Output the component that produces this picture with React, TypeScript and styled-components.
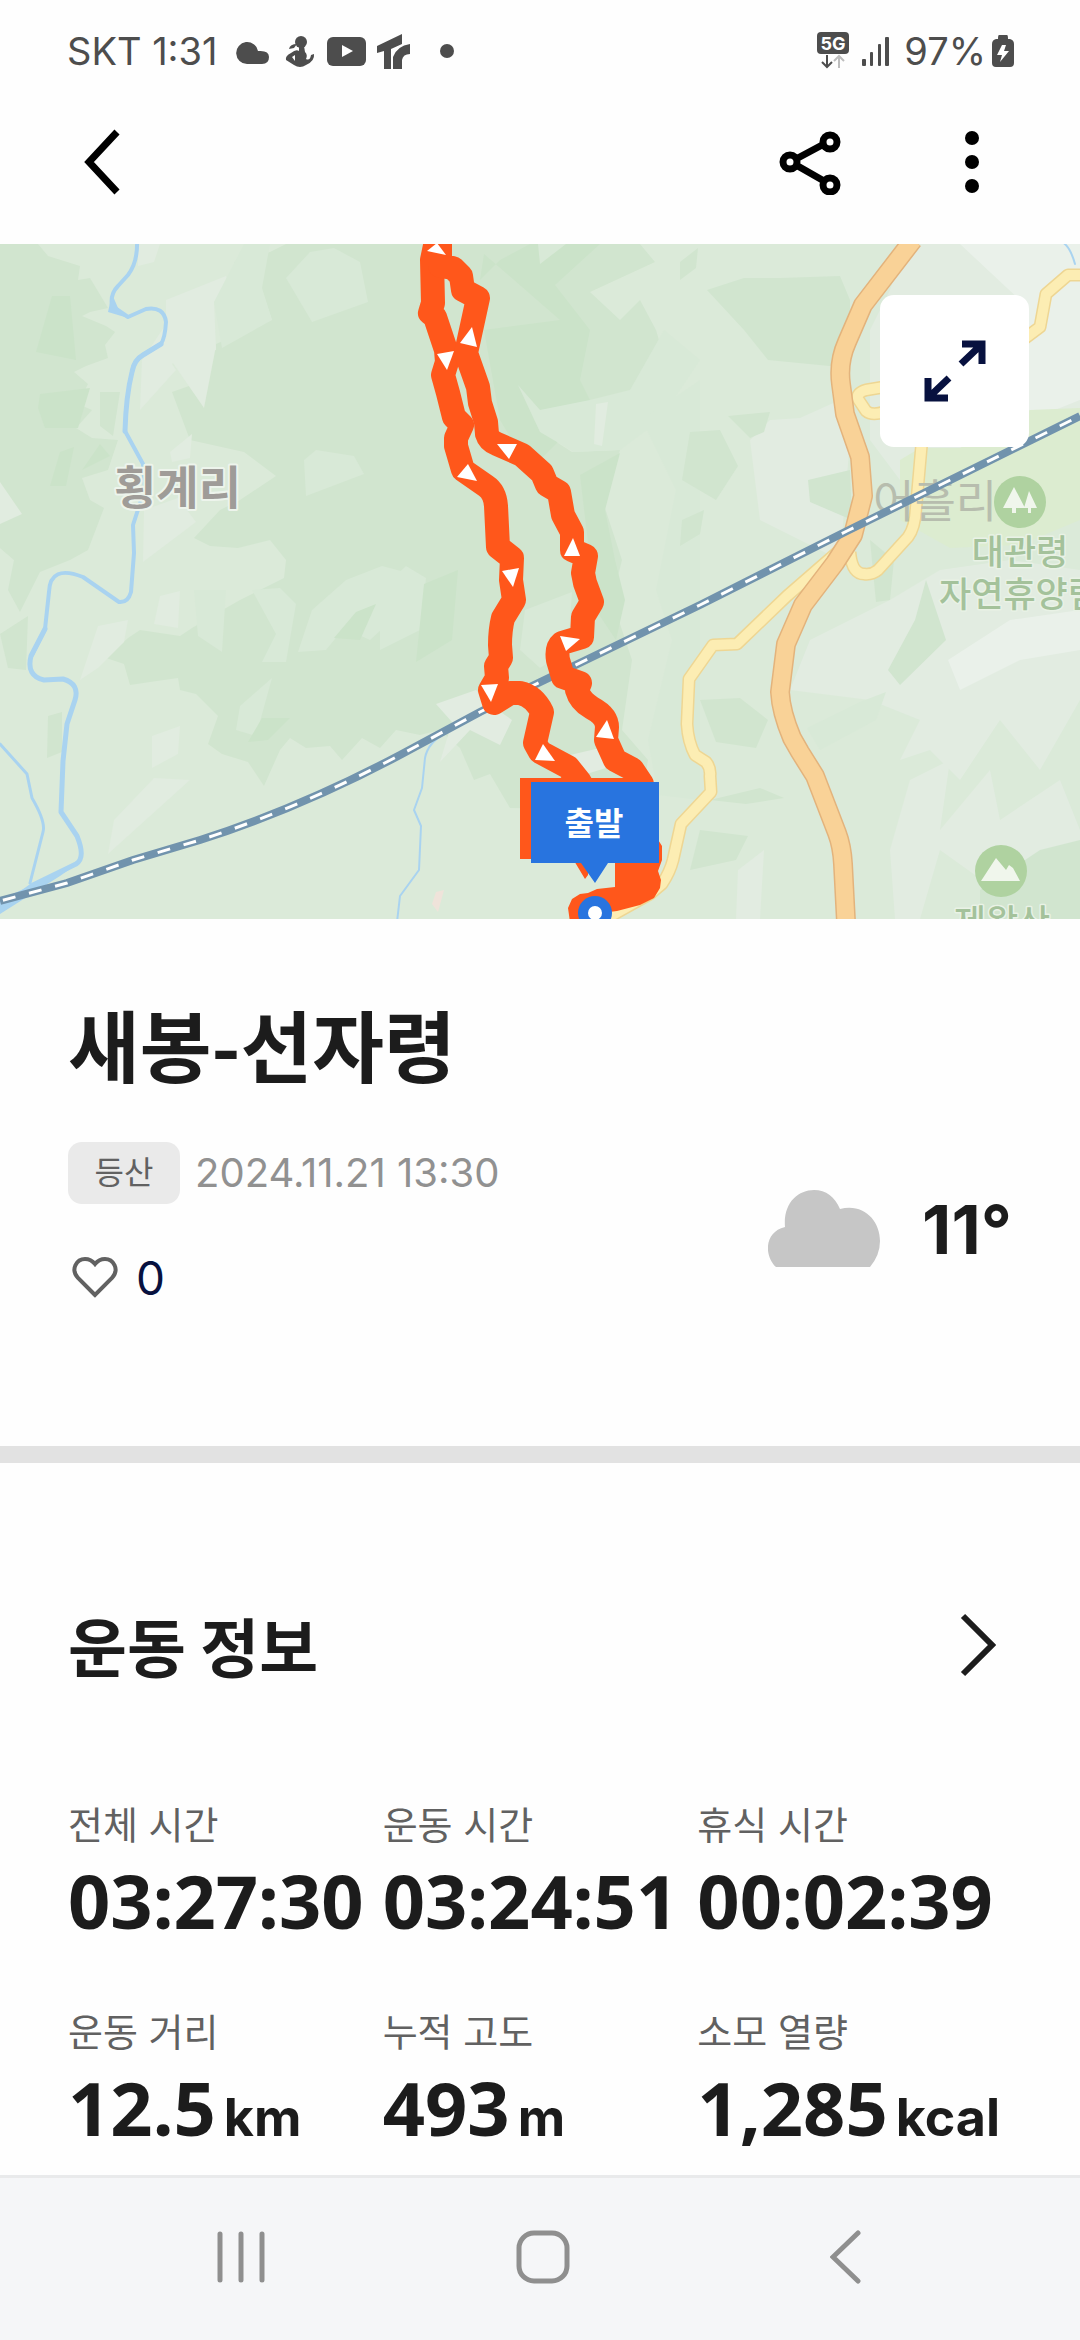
import React from "react";
import styled, { createGlobalStyle } from "styled-components";

const GlobalStyle = createGlobalStyle`
  *, *::before, *::after { box-sizing: border-box; }
  body {
    margin: 0;
    background: #fefefe;
    color: #1c1c1c;
    font-family: Inter, "Noto Sans CJK KR", sans-serif;
  }
  h1, h2, p, dl, dt, dd { margin: 0; }
  button { padding: 0; border: 0; background: none; cursor: pointer; font: inherit; color: inherit; }
  svg { display: block; }
`;

const Screen = styled.div`
  display: flex;
  flex-direction: column;
  min-height: 100vh;
`;

const StatusBar = styled.div`
  display: flex;
  align-items: center;
  justify-content: space-between;
  height: 102px;
  padding: 0 66px 0 67px;
  color: #4d4d4d;
  font-size: 38px;
  line-height: 48px;
`;

const StatusGroup = styled.div<{ $gap: number }>`
  display: flex;
  align-items: center;
  gap: ${(p) => p.$gap}px;
`;

const StatusText = styled.span`
  white-space: nowrap;
`;

const Header = styled.header`
  display: flex;
  align-items: center;
  justify-content: space-between;
  height: 142px;
  padding: 0 68px 22px 62px;
`;

const HeaderActions = styled.div`
  display: flex;
  gap: 82px;
`;

const IconButton = styled.button`
  display: grid;
  place-items: center;
  width: 80px;
  height: 80px;
`;

const MapPanel = styled.section`
  position: relative;
  height: 675px;
  overflow: hidden;
  background: #dbead9;
`;

const MapCanvas = styled.svg`
  width: 100%;
  height: 100%;
`;

const MapLabel = styled.text`
  font-family: "Noto Sans CJK KR", sans-serif;
  paint-order: stroke;
  stroke-linejoin: round;
`;

const ExpandButton = styled.button`
  position: absolute;
  top: 51px;
  right: 51px;
  display: grid;
  place-items: center;
  width: 149px;
  height: 152px;
  border-radius: 14px;
  background: #fff;
`;

const Summary = styled.section`
  padding: 80px 68px 138px;
`;

const Title = styled.h1`
  font-family: "Noto Sans CJK KR", sans-serif;
  font-size: 78px;
  font-weight: 700;
  line-height: 88px;
`;

const SummaryRow = styled.div`
  display: flex;
  align-items: center;
  justify-content: space-between;
  margin-top: 55px;
`;

const SummaryDetails = styled.div`
  display: flex;
  flex-direction: column;
  gap: 44px;
`;

const Meta = styled.div`
  display: flex;
  align-items: center;
  gap: 15px;
`;

const Chip = styled.span`
  display: grid;
  place-items: center;
  width: 112px;
  height: 62px;
  border-radius: 14px;
  background: #eaeaea;
  color: #616161;
  font-size: 32px;
  line-height: 48px;
`;

const DateText = styled.time`
  color: #919191;
  font-size: 40px;
  line-height: 48px;
`;

const LikeButton = styled.button`
  display: flex;
  align-items: center;
  gap: 18px;
  height: 60px;
  padding-left: 4px;
  color: #07113f;
  font-size: 46px;
  line-height: 60px;
`;

const Weather = styled.div`
  display: flex;
  align-items: center;
  gap: 42px;
  padding-top: 8px;
  font-size: 68px;
  font-weight: 700;
  line-height: 80px;
`;

const Divider = styled.hr`
  width: 100%;
  height: 17px;
  margin: 0;
  border: 0;
  background: #e2e2e2;
`;

const Workout = styled.section`
  flex: 1;
  padding: 141px 68px 20px;
`;

const SectionHeader = styled.div`
  display: flex;
  align-items: center;
  justify-content: space-between;
`;

const SectionTitle = styled.h2`
  font-family: "Noto Sans CJK KR", sans-serif;
  font-size: 64px;
  font-weight: 700;
  line-height: 80px;
`;

const Stats = styled.dl`
  display: grid;
  grid-template-columns: repeat(3, minmax(0, 1fr));
  row-gap: 65px;
  margin-top: 117px;
`;

const Stat = styled.div`
  display: flex;
  flex-direction: column;
  gap: 10px;
  white-space: nowrap;
`;

const StatLabel = styled.dt`
  color: #616161;
  font-size: 38px;
  line-height: 48px;
`;

const StatValue = styled.dd`
  display: flex;
  align-items: baseline;
  gap: 8px;
  font-family: "Noto Sans", sans-serif;
  font-size: 74px;
  font-weight: 700;
  line-height: 84px;
`;

const Unit = styled.span`
  font-family: Inter, sans-serif;
  font-size: 52px;
  line-height: 60px;
`;

const NavBar = styled.nav`
  display: grid;
  grid-template-columns: repeat(3, 1fr);
  align-items: center;
  height: 165px;
  padding: 0 83px 4px 90px;
  border-top: 3px solid #e9eaeb;
  background: #f5f6f8;
`;

const NavButton = styled.button`
  display: grid;
  place-items: center;
  height: 100px;
`;

const stats = [
  { label: "전체 시간", value: "03:27:30" },
  { label: "운동 시간", value: "03:24:51" },
  { label: "휴식 시간", value: "00:02:39" },
  { label: "운동 거리", value: "12.5", unit: "km" },
  { label: "누적 고도", value: "493", unit: "m" },
  { label: "소모 열량", value: "1,285", unit: "kcal" },
];

/* Map geometry, in map units */
const shade = {
  wood: "#d1e5cf",
  deep: "#cbe3c9",
  light: "#e1ece0",
  mid: "#d8e9d7",
  pale: "#e2ece1",
  snow: "#eaf1ea",
};

const terrain: [string, string][] = [
  [shade.wood, "0,244 38,244 48,256 80,266 78,280 90,278 108,308 90,312 82,316 106,326 115,332 105,345 108,358 86,366 74,372 88,384 78,404 92,410 76,428 92,438 118,440 108,470 82,478 90,500 104,508 88,550 70,560 40,572 20,612 8,590 14,560 0,548"],
  [shade.wood, "0,634 28,616 26,670 8,668"],
  [shade.wood, "48,716 62,712 62,752 47,758"],
  [shade.wood, "234,262 270,252 286,244 640,244 655,262 590,292 620,320 640,300 656,330 668,370 630,396 545,405 530,425 572,452 620,450 604,505 622,560 612,600 632,660 622,730 648,760 640,810 510,808 490,774 474,780 460,748 440,730 420,735 396,730 380,748 362,738 342,760 330,746 306,748 290,738 280,750 264,786 248,762 222,754 208,744 218,716 196,694 180,690 178,678 150,682 130,685 124,664 106,658 128,638 140,630 180,636 192,628 226,608 240,600 284,578 286,560 270,540 238,548 210,546 194,538 220,510 240,500 276,476 244,452 190,440 172,392 206,380 216,344 272,320 262,290"],
  [shade.deep, "52,296 70,296 76,360 36,352"],
  [shade.deep, "40,394 90,388 78,428 45,428 38,408"],
  [shade.deep, "60,452 74,447 66,486 50,486"],
  [shade.deep, "100,444 110,456 82,470"],
  [shade.wood, "100,392 120,392 113,436 100,426"],
  [shade.light, "138,244 160,244 154,262 138,266"],
  [shade.light, "226,276 232,290 214,302 216,350 190,346 172,364 176,370 140,410 142,360 166,324 166,300"],
  [shade.light, "170,322 200,322 216,346 204,408 164,350"],
  [shade.light, "192,434 190,458 172,462 170,452"],
  [shade.light, "144,510 178,498 196,522 143,562"],
  [shade.light, "0,482 22,514 0,524"],
  [shade.light, "98,626 128,620 124,642 98,668 80,680"],
  [shade.light, "160,596 180,591 178,628 154,624"],
  [shade.light, "152,736 180,726 178,754 152,768"],
  [shade.light, "154,778 190,780 108,854 114,820"],
  [shade.mid, "286,278 310,252 334,248 360,262 368,302 312,322"],
  [shade.mid, "244,244 270,244 262,288 272,320 222,348 214,302"],
  [shade.mid, "304,460 316,450 354,456 364,474 306,496"],
  [shade.mid, "194,590 226,590 222,652 198,636"],
  [shade.mid, "252,590 280,588 296,604 286,662 262,662 276,634"],
  [shade.mid, "298,652 312,610 346,580 382,566 420,576 420,620 392,620 370,640 344,628 326,650"],
  [shade.mid, "240,706 272,678 256,736 236,730"],
  [shade.mid, "406,566 426,578 420,630 380,650 380,590"],
  [shade.deep, "484,254 480,280 500,260 530,244 600,244 555,285 590,330 580,380 600,420 560,440 530,470 500,420 484,330 560,320"],
  [shade.deep, "580,475 620,453 605,510 615,560 625,600 616,640 596,610"],
  [shade.deep, "262,718 290,718 268,740 248,742"],
  [shade.deep, "356,612 376,604 360,640 334,638"],
  [shade.deep, "424,584 458,570 452,640 416,662"],
  [shade.mid, "538,244 566,244 540,264"],
  [shade.mid, "518,385 540,410 590,400 630,390 664,330 700,360 660,420 620,450 574,452 540,432"],
  [shade.mid, "525,610 572,592 568,650 540,668 520,650"],
  [shade.mid, "642,420 700,380 700,800 658,795 648,740 672,640 656,590 676,490"],
  [shade.light, "596,404 608,402 602,446 594,444"],
  [shade.wood, "707,290 744,278 780,278 840,276 850,300 850,368 768,360 744,330"],
  [shade.wood, "680,262 698,248 696,268 680,280"],
  [shade.wood, "690,432 720,430 738,466 716,500 682,480"],
  [shade.wood, "682,520 704,510 700,534 680,546"],
  [shade.pale, "750,440 770,420 800,418 840,400 850,440 840,560 760,520"],
  [shade.wood, "728,416 770,412 764,432 750,438"],
  [shade.wood, "808,480 850,470 852,520 810,502"],
  [shade.pale, "870,330 890,290 900,262 920,244 1080,244 1080,420 1000,440 900,480 870,440"],
  [shade.snow, "960,244 1080,244 1080,400 1030,420 1020,300"],
  ["#dcecd0", "900,460 920,448 960,448 1030,410 1080,408 1080,520 1020,545 950,548 900,520"],
  [shade.pale, "890,600 940,570 1010,560 1080,570 1080,700 1040,770 1000,720 960,780 930,750 900,760 920,720 870,700 790,690 810,640"],
  [shade.snow, "948,660 1010,620 1080,610 1080,650 1020,660 960,690"],
  [shade.wood, "915,620 926,580 946,640 900,685 888,670"],
  [shade.mid, "807,728 860,702 886,692 876,720 820,750"],
  [shade.wood, "870,540 894,560 890,600 876,602"],
  [shade.pale, "890,850 910,780 950,760 940,830 990,770 1000,820 1060,780 1080,830 1080,919 1040,880 1010,900 940,850 920,919 895,919"],
  [shade.wood, "700,700 740,698 768,720 756,748 716,742"],
  [shade.wood, "710,800 760,788 784,798 746,804"],
  [shade.wood, "700,830 748,836 736,860 690,870"],
  [shade.wood, "980,890 1040,850 1080,840 1080,919 980,919"],
  [shade.pale, "738,870 764,850 760,919 736,919"],
  [shade.pale, "436,704 476,690 492,706 512,720 500,745 470,730 440,762 452,722"],
  [shade.pale, "570,755 600,748 606,768 580,776"],
  ["#efe3da", "436,892 444,890 438,912 432,904"],
];

const highway =
  "M913 240 L863 305 L847 342 Q838 362 841 384 L845 414 L860 457 L863 496 L853 535 L835 563 L803 605 L786 644 L780 692 Q781 712 792 738 L800 752 L815 776 L837 833 Q842 846 843 864 L846 922";

const localRoads = [
  "M848 543 L787 596 L737 644 L713 645 L689 679 L687 724 Q688 742 695 755 L706 762 Q711 768 710 776 L711 792 L681 824 L673 860 Q670 872 662 884 L650 894 L600 922",
  "M850 552 Q852 574 864 574 Q872 575 878 570 L908 537 Q915 528 916 508 L922 440",
  "M884 387 L866 390 Q856 393 858 399 L866 411 Q872 416 884 412",
  "M1084 275 L1068 275 L1046 294 L1040 327 L1024 339",
];

const railway =
  "M0 901 L67 883 L133 860 L200 840 Q300 808 400 755 L480 712 L530 687 L700 605 L847 531 L1080 416";

const trackOut =
  "M437 236 L432 260 L433 303 L430 313 L435 317 L446 350 L447 362 L443 375 L448 393 L454 417 L462 425 L456 438 L456 446 L463 470 L486 486 Q495 492 496 506 L498 547 L512 558 L511 580 L514 600 L503 618 Q500 630 500 645 L501 658 L496 666 L497 678 L490 690 L494 703 L510 693 L520 693 Q534 696 542 712 L535 743 L540 752 L568 767 L580 782";

const trackBack =
  "M440 240 L440 266 L453 268 L461 276 L463 290 L478 298 L466 353 L478 387 L480 403 L486 422 L487 434 Q489 441 497 444 L522 455 L542 473 L547 485 L559 492 L563 515 L572 532 L572 550 L586 556 L583 573 L585 583 L592 602 L583 617 L582 637 L562 643 Q556 648 558 660 L563 677 L580 683 L577 690 Q580 701 592 708 Q607 716 607 727 L606 740 L615 760 L632 769 L642 784";

const arrows = [
  "437,243 427,251 446,255",
  "472,327 460,343 477,347",
  "437,354 454,351 447,370",
  "497,444 517,444 509,459",
  "468,464 457,477 477,481",
  "573,538 564,556 580,556",
  "502,571 519,568 513,587",
  "560,636 580,639 566,651",
  "481,685 498,684 491,702",
  "607,720 596,737 614,739",
  "543,744 535,760 555,761",
];

function RouteMap() {
  return (
    <MapCanvas viewBox="0 244 1080 675" preserveAspectRatio="xMidYMid slice" role="img" aria-label="경로 지도">
      <rect x="0" y="244" width="1080" height="675" fill="#dbead9" />
      {terrain.map(([fill, points], i) => (
        <polygon key={i} points={points} fill={fill} />
      ))}

      <g fill="none" stroke="#a9d3f0" strokeLinecap="round" strokeLinejoin="round">
        <path strokeWidth="4" d="M137 240 Q138 262 128 275 L118 286 Q110 294 112 306 L128 317 L146 309 Q164 306 166 322 Q165 338 161 344 L143 355 Q134 360 132 372" />
        <path strokeWidth="5" d="M161 344 L143 355 Q134 360 132 372 Q126 396 125 431" />
        <path strokeWidth="4" d="M125 431 L143 464 L145 488 L133 525 L134 553 L131 592 Q128 603 119 602 L83 577 Q50 564 49 592 L45 629 L32 655" />
        <path strokeWidth="5" d="M45 629 L31 656 Q26 676 44 680 L63 679 Q80 684 75 700 L67 724 L63 761 L61 812 L77 836 Q86 858 76 864 L33 885 L-4 912" />
        <path strokeWidth="3" d="M0 744 L27 774 L32 798 Q46 822 43 832 L30 883" />
        <path strokeWidth="2" d="M480 710 L446 733 Q428 742 425 758 L422 788 L414 810 L421 826 L419 870 L400 896 L397 922" />
        <path strokeWidth="2" d="M1062 242 Q1070 246 1075 264" />
      </g>
      <polygon fill="#a9d3f0" points="112,294 108,312 128,318 118,308" />
      <polygon fill="#a9d3f0" points="30,886 80,862 60,876 0,914 0,900" />

      <g fill="none" strokeLinejoin="round">
        {localRoads.map((d) => (
          <path key={d} d={d} stroke="#eed693" strokeWidth="13" />
        ))}
        {localRoads.map((d) => (
          <path key={d} d={d} stroke="#fcedb3" strokeWidth="10" />
        ))}
        <path d={highway} stroke="#e3b37c" strokeWidth="20" />
        <path d={highway} stroke="#f9d297" strokeWidth="17" />
      </g>

      <MapLabel x="873" y="518" fontSize="45" fill="#b7bdae">어흘리</MapLabel>

      <g fill="none">
        <path d={railway} stroke="#7193ad" strokeWidth="8" />
        <path d={railway} stroke="#fff" strokeWidth="3" strokeDasharray="13 14" strokeDashoffset="-3" />
      </g>

      <MapLabel x="114" y="504" fontSize="46" fontWeight="700" fill="#9f9c98" stroke="#edf4ec" strokeWidth="4">횡계리</MapLabel>

      <g>
        <circle cx="1020" cy="502" r="26" fill="#afd2a0" />
        <path fill="#f0f6ec" d="M1014 487 L1025 508 H1016 V513 H1012 V508 H1003 Z M1029 491 L1037 508 H1031 V513 H1028 V508 H1024 Z" />
        <circle cx="1001" cy="871" r="26" fill="#afd2a0" />
        <path fill="#f0f6ec" d="M981 881 L996 858 L1006 870 L1009 865 L1013 868 L1020 881 Z" />
        <g fontWeight="500" fill="#a4c29b" stroke="#e9f2e6" strokeWidth="3">
          <MapLabel x="1020" y="565" fontSize="35" textAnchor="middle">대관령</MapLabel>
          <MapLabel x="939" y="607" fontSize="35">자연휴양림</MapLabel>
          <MapLabel x="1002" y="935" fontSize="35" textAnchor="middle">제왕산</MapLabel>
        </g>
      </g>

      <g fill="none" stroke="#ff571b" strokeWidth="24" strokeLinecap="round" strokeLinejoin="round">
        <path d={trackOut} />
        <path d={trackBack} />
      </g>
      <polygon
        fill="#ff571b"
        points="615,858 655,835 662,846 662,860 658,871 661,880 660,888 654,898 640,905 617,911 593,914 570,922 568,908 572,899 580,894 588,893 597,889 615,887"
      />
      {arrows.map((points) => (
        <polygon key={points} points={points} fill="#fff" />
      ))}

      <path fill="#ff571b" d="M520 778 H650 V859 H588 V875 L585 879 L573 859 H520 Z" />
      <path fill="#2874df" d="M531 782 H659 V863 H608 L595 883 L581 863 H531 Z" />
      <MapLabel x="594" y="835" fontSize="32" fontWeight="700" fill="#fff" textAnchor="middle">출발</MapLabel>
      <circle cx="595" cy="913" r="17" fill="#2874df" />
      <circle cx="595" cy="913" r="7" fill="#fff" />
    </MapCanvas>
  );
}

function NotificationIcons() {
  return (
    <svg width="220" height="38" viewBox="235 32 220 38" fill="#4d4d4d" aria-hidden="true">
      <path d="M247 64 A11 11 0 1 1 258 51 Q269 50 269 57 Q269 64 262 64 Z" />
      <circle cx="301" cy="42" r="6" />
      <path d="M289 49 Q290 44 297 44 L294 48 Z M299 46 H304 L305 52 Q308 55 306 59 Q310 61 311 55 L314 54 Q315 61 306 65 Q300 69 294 65 L286 60 Q285 56 291 53 Q296 49 299 51 Z" />
      <path d="M292 57 L295 55 L295 61 Z" fill="#fefefe" />
      <rect x="327" y="37" width="39" height="29" rx="6" />
      <path d="M342 45 L353 51 L342 57 Z" fill="#fefefe" />
      <path d="M377 46 L402 34 V44 L391 49 V69 H384 V51 L377 53 Z" />
      <path d="M393 69 V57 Q397 46 410 44 V54 Q403 54 402 60 V69 Z" />
      <circle cx="447" cy="51" r="7" />
    </svg>
  );
}

function NetworkIcons() {
  return (
    <svg width="74" height="38" viewBox="814 31 74 38" fill="#4d4d4d" aria-label="5G">
      <rect x="815" y="31" width="32" height="22" rx="4" />
      <text x="831" y="49" fontSize="18" fontWeight="700" fontFamily="Inter, sans-serif" fill="#fff" textAnchor="middle">5G</text>
      <path d="M825 54 V66 M820 61 L825 66 L830 61" fill="none" stroke="#4d4d4d" strokeWidth="2" />
      <path d="M837 67 V55 M832 60 L837 55 L842 60" fill="none" stroke="#bdbdbd" strokeWidth="2" />
      <rect x="860" y="58" width="4" height="7" rx="1" />
      <rect x="868" y="51" width="3" height="14" rx="1" />
      <rect x="876" y="43" width="3" height="22" rx="1" />
      <rect x="883" y="36" width="4" height="29" rx="1" />
    </svg>
  );
}

export default function App() {
  return (
    <Screen>
      <GlobalStyle />

      <StatusBar>
        <StatusGroup $gap={18}>
          <StatusText>SKT 1:31</StatusText>
          <NotificationIcons />
        </StatusGroup>
        <StatusGroup $gap={14}>
          <NetworkIcons />
          <StatusGroup $gap={6}>
            <StatusText>97%</StatusText>
            <svg width="22" height="32" viewBox="0 0 22 32" fill="#4d4d4d" aria-hidden="true">
              <path d="M7 0 H15 Q16 0 16 4 H18 Q22 5 22 9 V28 Q22 32 18 32 H4 Q0 32 0 28 V9 Q0 5 4 4 H6 Q6 0 7 0 Z" />
              <path d="M10 10 H14 L12 16 H17 L8 27 L10 20 H5 Z" fill="#fff" />
            </svg>
          </StatusGroup>
        </StatusGroup>
      </StatusBar>

      <Header>
        <IconButton aria-label="뒤로">
          <svg width="50" height="70" viewBox="0 0 50 70" fill="none" stroke="#000" strokeWidth="7">
            <path d="M40 5 L12 35 L40 65" />
          </svg>
        </IconButton>
        <HeaderActions>
          <IconButton aria-label="공유">
            <svg width="62" height="66" viewBox="0 0 62 66" fill="none" stroke="#000" strokeWidth="7">
              <path d="M17 30 L45 15 M17 36 L45 52" />
              <circle cx="11" cy="33" r="7" />
              <circle cx="51" cy="13" r="7" />
              <circle cx="51" cy="56" r="7" />
            </svg>
          </IconButton>
          <IconButton aria-label="더보기">
            <svg width="14" height="62" viewBox="0 0 14 62">
              <circle cx="7" cy="7" r="7" />
              <circle cx="7" cy="31" r="7" />
              <circle cx="7" cy="55" r="7" />
            </svg>
          </IconButton>
        </HeaderActions>
      </Header>

      <MapPanel>
        <RouteMap />
        <ExpandButton aria-label="지도 확대">
          <svg width="62" height="62" viewBox="0 0 62 62" fill="none" stroke="#07113f" strokeWidth="7">
            <path d="M38 4 H58 V24 M58 4 L37 24" />
            <path d="M24 58 H4 V38 M4 58 L25 38" />
          </svg>
        </ExpandButton>
      </MapPanel>

      <Summary>
        <Title>새봉-선자령</Title>
        <SummaryRow>
          <SummaryDetails>
            <Meta>
              <Chip>등산</Chip>
              <DateText dateTime="2024-11-21T13:30">2024.11.21 13:30</DateText>
            </Meta>
            <LikeButton aria-label="좋아요 0">
              <svg width="46" height="42" viewBox="0 0 46 42" fill="none" stroke="#616161" strokeWidth="4">
                <path d="M23 38 L6 21 C-2 12 5 2 13 2 Q19 2 23 7 Q27 2 33 2 C41 2 48 12 40 21 Z" />
              </svg>
              0
            </LikeButton>
          </SummaryDetails>
          <Weather>
            <svg width="112" height="78" viewBox="0 0 112 78" fill="#c6c6c6" role="img" aria-label="흐림">
              <path d="M8 77 C-4 66 -4 42 17 37 C15 13 30 0 46 0 C58 0 67 7 72 19 C96 13 112 31 112 51 Q112 65 102 77 Z" />
            </svg>
            <span>11°</span>
          </Weather>
        </SummaryRow>
      </Summary>

      <Divider />

      <Workout>
        <SectionHeader>
          <SectionTitle>운동 정보</SectionTitle>
          <IconButton aria-label="운동 정보 더보기">
            <svg width="48" height="66" viewBox="0 0 48 66" fill="none" stroke="#1c1c1c" strokeWidth="6">
              <path d="M15 5 L44 34 L15 63" />
            </svg>
          </IconButton>
        </SectionHeader>
        <Stats>
          {stats.map((s) => (
            <Stat key={s.label}>
              <StatLabel>{s.label}</StatLabel>
              <StatValue>
                {s.value}
                {s.unit && <Unit>{s.unit}</Unit>}
              </StatValue>
            </Stat>
          ))}
        </Stats>
      </Workout>

      <NavBar>
        <NavButton aria-label="최근 앱">
          <svg width="48" height="52" viewBox="0 0 48 52" stroke="#8f8f8f" strokeWidth="5" strokeLinecap="round">
            <path d="M3 3 V49 M24 3 V49 M45 3 V49" />
          </svg>
        </NavButton>
        <NavButton aria-label="홈">
          <svg width="54" height="54" viewBox="0 0 54 54" fill="none" stroke="#8f8f8f" strokeWidth="5">
            <rect x="3" y="3" width="48" height="48" rx="15" />
          </svg>
        </NavButton>
        <NavButton aria-label="이전">
          <svg width="32" height="54" viewBox="0 0 32 54" fill="none" stroke="#8f8f8f" strokeWidth="5" strokeLinecap="round">
            <path d="M28 3 L3 27 L28 51" />
          </svg>
        </NavButton>
      </NavBar>
    </Screen>
  );
}
